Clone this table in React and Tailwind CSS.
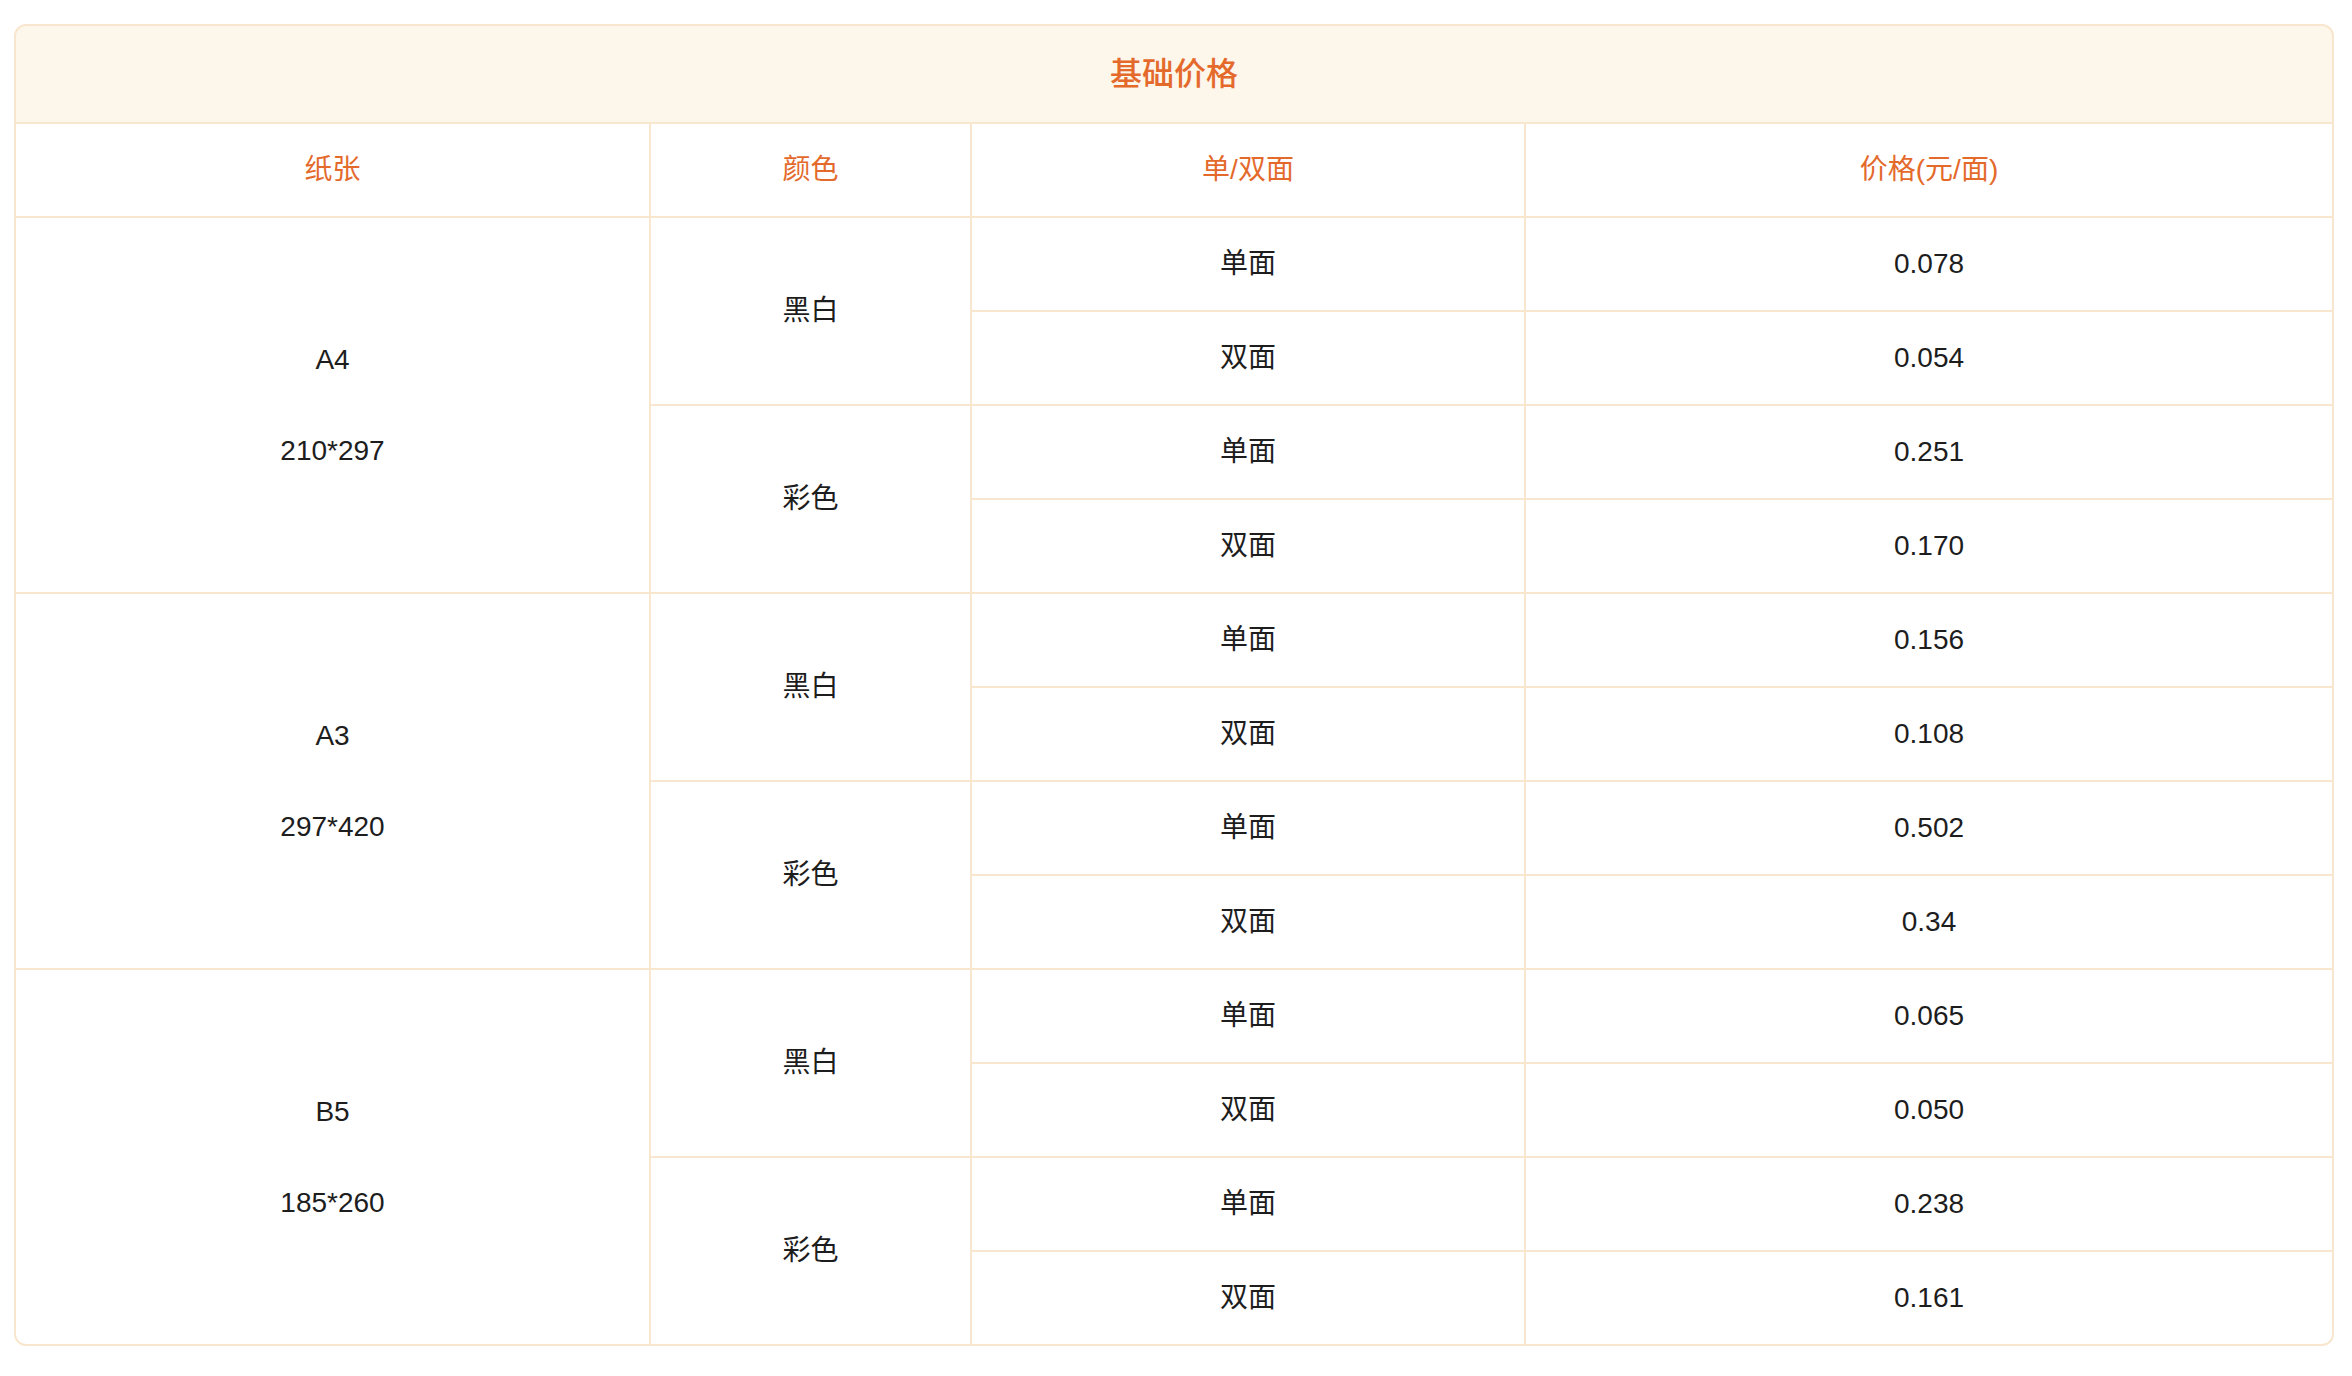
import React from "react";

const groups = [
  { paper: "A4", size: "210*297", prices: ["0.078", "0.054", "0.251", "0.170"] },
  { paper: "A3", size: "297*420", prices: ["0.156", "0.108", "0.502", "0.34"] },
  { paper: "B5", size: "185*260", prices: ["0.065", "0.050", "0.238", "0.161"] },
];

const cell = "bg-white flex items-center justify-center";

export default function App() {
  return (
    <div
      className="min-h-screen bg-white pt-[24px] pl-[14px]"
      style={{ fontFamily: '"Liberation Sans", "Noto Sans CJK SC", sans-serif' }}
    >
      <div className="w-[2320px] border-2 border-[#f9e6cf] rounded-[12px] overflow-hidden bg-[#f9e6cf]">
        <div className="grid grid-cols-[633px_319px_552px_806px] grid-rows-[96px] auto-rows-[92px] gap-[2px] text-[28px] text-[#1d1d1d]">
          <div className="col-span-4 bg-[#fdf6ea] flex items-center justify-center text-[32px] font-medium text-[#e46a2c]">
            基础价格
          </div>
          {["纸张", "颜色", "单/双面", "价格(元/面)"].map((h) => (
            <div key={h} className={`${cell} text-[#e46a2c]`}>
              {h}
            </div>
          ))}
          {groups.map((g) => (
            <React.Fragment key={g.paper}>
              <div className={`${cell} row-span-4 col-start-1 flex-col gap-[51px] leading-[40px]`}>
                <div>{g.paper}</div>
                <div>{g.size}</div>
              </div>
              <div className={`${cell} row-span-2 col-start-2`}>黑白</div>
              <div className={`${cell} col-start-3`}>单面</div>
              <div className={`${cell} col-start-4`}>{g.prices[0]}</div>
              <div className={`${cell} col-start-3`}>双面</div>
              <div className={`${cell} col-start-4`}>{g.prices[1]}</div>
              <div className={`${cell} row-span-2 col-start-2`}>彩色</div>
              <div className={`${cell} col-start-3`}>单面</div>
              <div className={`${cell} col-start-4`}>{g.prices[2]}</div>
              <div className={`${cell} col-start-3`}>双面</div>
              <div className={`${cell} col-start-4`}>{g.prices[3]}</div>
            </React.Fragment>
          ))}
        </div>
      </div>
    </div>
  );
}
